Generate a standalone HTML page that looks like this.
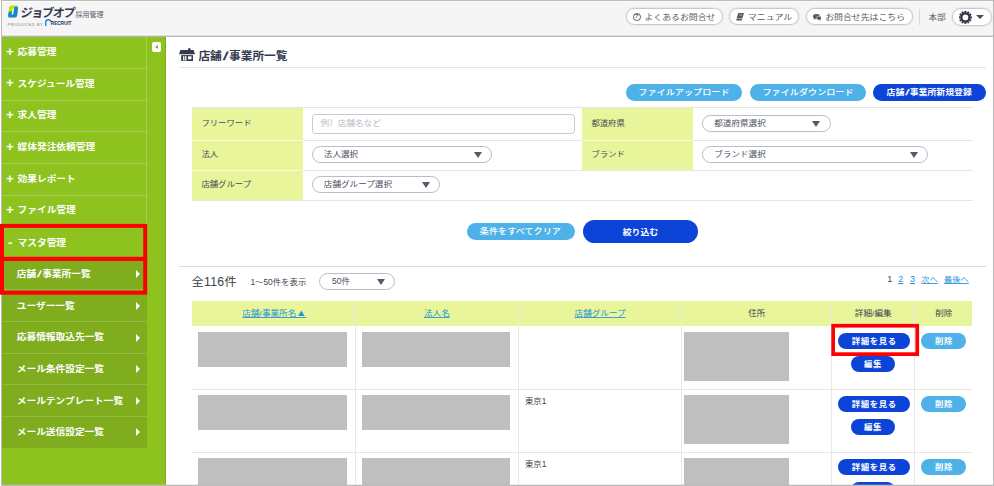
<!DOCTYPE html>
<html lang="ja"><head><meta charset="utf-8"><title>店舗/事業所一覧</title>
<style>
*{box-sizing:border-box;margin:0;padding:0}
html,body{width:994px;height:486px;overflow:hidden;background:#fff}
body{position:relative;font-family:"Liberation Sans","Noto Sans CJK JP",sans-serif;color:#3e4250;font-size:8.7px;line-height:1}
.a{position:absolute;white-space:nowrap}
.q{display:inline-block;line-height:1;transform:scaleY(.89);transform-origin:50% 95%}
.d{display:inline-block;line-height:1;transform:scaleY(1.07);transform-origin:50% 85%}
.qb{display:inline-block;line-height:1;transform:scaleY(.92);transform-origin:50% 95%}
.frame{left:1px;top:0;width:993px;height:486px;border:1px solid #bcbcbc;z-index:50;pointer-events:none;box-shadow:inset 0 -1px 0 rgba(188,188,188,.3),-1px 0 0 #fff}
.hdr{left:0;top:0;width:994px;height:34px;background:#f5f5f5;border-top:2px solid #fbfbfb}
.hline{left:0;top:34px;width:994px;height:3px;background:linear-gradient(#fdfdfd 0,#fdfdfd 1px,#d9dade 1px,#d9dade 2px,#b7b9c0 2px,#b7b9c0 3px)}
.side{left:2px;top:36.8px;width:164.3px;height:450px;background:#8dc21f}
.mi{left:2px;width:145px;height:31.7px;color:#fff;font-weight:bold;font-size:9.7px;line-height:30.4px}
.mi span.s{position:absolute;font-size:13.4px;top:-0.1px;margin-left:-0.3px}
.mi span.t{position:absolute;left:15.6px}
.si{left:2px;width:145px;height:31.55px;color:#fff;font-weight:bold;font-size:9.7px;line-height:30.9px}
.si span.t{position:absolute;left:14.8px}
.si i{position:absolute;left:134.2px;top:11.8px;width:0;height:0;border-left:4.2px solid #fff;border-top:4px solid transparent;border-bottom:4px solid transparent}
.pill{background:#fff;border:1px solid #c6c9d2;box-shadow:0 0 0 1px rgba(200,203,212,.28);border-radius:9px;top:8.4px;height:17px;line-height:15px;color:#555a66;font-size:8.9px}
.sel{background:#fff;border:1px solid #babdc8;border-radius:9px;height:16.6px;line-height:14.6px;color:#4a4e5a;font-size:8.6px}
.sel b{position:absolute;top:4.6px;width:0;height:0;border-top:6.6px solid #555a66;border-left:4px solid transparent;border-right:4px solid transparent}
.lb{background:#e8f59b;color:#454a55;font-size:8.4px}
.btn{border-radius:12px;color:#fff;text-align:center;font-size:8.9px}
.lt{background:#4eb2e8;font-weight:500;font-size:9.15px}
.dk{background:#0c44d8;font-weight:bold}
.ln{background:#e6e6e6;height:1px}
.th{background:#e8f59b;top:300.6px;height:25.4px;line-height:25.4px;text-align:center;font-size:8.6px;color:#3e4250}
.g{background:#bfbfbf}
.sl{display:inline-block;margin:0 0.17em;transform:skewX(-10deg) scaleX(1.5)}
.vl{background:#e9e9e9;width:1px}
a,u{color:#2494d9;text-decoration:underline}
</style></head><body>

<div class="a hdr"></div><div class="a hline"></div>
<svg class="a" style="left:7.7px;top:4.7px" width="10.2" height="13.1" viewBox="0 0 108 134">
<clipPath id="lc"><path d="M36 0H84Q110 0 107 26L97 108Q94 134 68 134H24Q-2 134 1 108L11 26Q14 0 36 0Z"/></clipPath>
<g clip-path="url(#lc)"><rect width="108" height="134" fill="#bfe200"/>
<path d="M62 36Q64 14 84 14Q104 14 108 30V134H-5L4 80Q8 64 24 64Q42 64 40 82L38 98H56Z" fill="#0a88e2"/>
<path d="M47 36Q48 32 52 32H58Q62 32 61.5 36L55 94Q54.5 98 50 98H44Q40 98 40.5 94Z" fill="#fff"/></g></svg>
<div class="a" style="left:20.1px;top:5.5px;font-size:12px;font-weight:bold;color:#353a4e;line-height:14px;transform:skewX(-6deg);transform-origin:left bottom;letter-spacing:-1.35px">ジョブオプ</div>
<div class="a" style="left:75.6px;top:11px;font-size:7px;color:#5a5e6a;line-height:8px">採用管理</div>
<div class="a" style="left:7.4px;top:21.6px;font-size:4.3px;color:#7d7f86;line-height:5px;letter-spacing:0.4px">PRODUCED BY</div>
<svg class="a" style="left:45.1px;top:18.8px" width="6.6" height="7.6" viewBox="0 0 14 16"><path d="M1.5 15.5V7.5Q1.5 1.5 7.5 1.5Q12 1.5 12.8 6" fill="none" stroke="#1f7fd6" stroke-width="2.8" stroke-linecap="butt"/></svg>
<div class="a" style="left:50.8px;top:21.4px;font-size:4.8px;font-weight:bold;color:#22365e;line-height:5px;letter-spacing:-0.12px">RECRUIT</div>
<div class="a pill" style="left:625.6px;width:97px"><span class="a" style="left:6.2px;top:3.6px;width:7.8px;height:7.8px;border:1px solid #555a66;border-radius:50%;font-size:6px;line-height:5.8px;text-align:center;font-weight:bold">?</span><span class="a" style="left:17.8px;top:1px"><span class="q">よくあるお問合せ</span></span></div>
<div class="a pill" style="left:729.1px;width:70.1px"><svg class="a" style="left:5.8px;top:4px" width="8" height="7.5" viewBox="0 0 16 15"><path d="M4.5 0H16L12.5 11H1Z" fill="#555a66"/><path d="M7 2.6H13L12.2 5H6.2Z" fill="#9a9da8"/><path d="M0.6 12H12L11.4 15H2Q0 15 0.6 12Z" fill="#555a66"/></svg><span class="a" style="left:17.9px;top:1px"><span class="q">マニュアル</span></span></div>
<div class="a pill" style="left:806.1px;width:106.5px"><svg class="a" style="left:5.5px;top:4.4px" width="8.8" height="6.8" viewBox="0 0 17.6 13.6"><ellipse cx="6.8" cy="4.8" rx="6.8" ry="4.8" fill="#555a66"/><path d="M2.4 7.6L1.2 11.6L6.4 8.8Z" fill="#555a66"/><ellipse cx="12" cy="8.2" rx="5.4" ry="3.9" fill="#555a66" stroke="#fff" stroke-width="0.9"/><path d="M14.4 10.8L16.6 13.4L11.4 11.8Z" fill="#555a66"/></svg><span class="a" style="left:18.1px;top:1px"><span class="q">お問合せ先はこちら</span></span></div>
<div class="a" style="left:919.4px;top:9px;width:1px;height:16px;background:#d8d9de"></div>
<div class="a" style="left:928.6px;top:12.6px;font-size:8.6px;color:#555a66"><span class="q">本部</span></div>
<div class="a pill" style="left:952.2px;top:8.2px;width:39.6px;height:17.6px"><svg class="a" style="left:5.8px;top:1.8px" width="12.8" height="12.8" viewBox="0 0 24 24"><path d="M10.25 3.38L10.56 0.09L13.44 0.09L13.75 3.38L14.80 3.66L16.71 0.96L19.20 2.40L17.83 5.41L18.59 6.17L21.60 4.80L23.04 7.29L20.34 9.20L20.62 10.25L23.91 10.56L23.91 13.44L20.62 13.75L20.34 14.80L23.04 16.71L21.60 19.20L18.59 17.83L17.83 18.59L19.20 21.60L16.71 23.04L14.80 20.34L13.75 20.62L13.44 23.91L10.56 23.91L10.25 20.62L9.20 20.34L7.29 23.04L4.80 21.60L6.17 18.59L5.41 17.83L2.40 19.20L0.96 16.71L3.66 14.80L3.38 13.75L0.09 13.44L0.09 10.56L3.38 10.25L3.66 9.20L0.96 7.29L2.40 4.80L5.41 6.17L6.17 5.41L4.80 2.40L7.29 0.96L9.20 3.66Z" fill="#2d3142" stroke="#2d3142" stroke-width="0.8" stroke-linejoin="round"/><circle cx="12" cy="12" r="5.4" fill="#fff"/></svg>
<i class="a" style="left:22.8px;top:5.7px;width:0;height:0;border-top:4.6px solid #4a4e5c;border-left:4.2px solid transparent;border-right:4.2px solid transparent"></i></div>
<div class="a side"></div>
<div class="a" style="left:165px;top:37px;width:1px;height:449px;background:#7dac1b"></div>
<div class="a" style="left:146px;top:37px;width:1px;height:222px;background:rgba(255,255,255,.22)"></div>
<div class="a" style="left:2px;top:259px;width:145px;height:189px;background:#7fad1e"></div>
<div class="a mi" style="top:36.80px"><span class="s" style="left:4.2px">+</span><span class="t"><span class="qb">応募管理</span></span></div>
<div class="a" style="left:2px;top:68px;width:145px;height:1px;background:rgba(255,255,255,.24)"></div>
<div class="a mi" style="top:68.50px"><span class="s" style="left:4.2px">+</span><span class="t"><span class="qb">スケジュール管理</span></span></div>
<div class="a" style="left:2px;top:100px;width:145px;height:1px;background:rgba(255,255,255,.24)"></div>
<div class="a mi" style="top:100.20px"><span class="s" style="left:4.2px">+</span><span class="t"><span class="qb">求人管理</span></span></div>
<div class="a" style="left:2px;top:131px;width:145px;height:1px;background:rgba(255,255,255,.24)"></div>
<div class="a mi" style="top:131.90px"><span class="s" style="left:4.2px">+</span><span class="t"><span class="qb">媒体発注依頼管理</span></span></div>
<div class="a" style="left:2px;top:163px;width:145px;height:1px;background:rgba(255,255,255,.24)"></div>
<div class="a mi" style="top:163.60px"><span class="s" style="left:4.2px">+</span><span class="t"><span class="qb">効果レポート</span></span></div>
<div class="a" style="left:2px;top:195px;width:145px;height:1px;background:rgba(255,255,255,.24)"></div>
<div class="a mi" style="top:195.30px"><span class="s" style="left:4.2px">+</span><span class="t"><span class="qb">ファイル管理</span></span></div>
<div class="a" style="left:2px;top:227px;width:145px;height:1px;background:rgba(255,255,255,.24)"></div>
<div class="a mi" style="top:227.00px;line-height:31.7px"><span class="s" style="left:6.2px">-</span><span class="t"><span class="qb">マスタ管理</span></span></div>
<div class="a si" style="top:258.70px"><span class="t"><span class="qb">店舗<span class="sl">/</span>事業所一覧</span></span><i></i></div>
<div class="a si" style="top:290.25px;line-height:32.6px"><span class="t"><span class="qb">ユーザー一覧</span></span><i></i></div>
<div class="a" style="left:2px;top:289px;width:145px;height:1px;background:rgba(255,255,255,.17)"></div>
<div class="a si" style="top:321.80px"><span class="t"><span class="qb">応募情報取込先一覧</span></span><i></i></div>
<div class="a" style="left:2px;top:321px;width:145px;height:1px;background:rgba(255,255,255,.17)"></div>
<div class="a si" style="top:353.35px;line-height:32.6px"><span class="t"><span class="qb">メール条件設定一覧</span></span><i></i></div>
<div class="a" style="left:2px;top:353px;width:145px;height:1px;background:rgba(255,255,255,.17)"></div>
<div class="a si" style="top:384.90px;line-height:32.6px"><span class="t"><span class="qb">メールテンプレート一覧</span></span><i></i></div>
<div class="a" style="left:2px;top:384px;width:145px;height:1px;background:rgba(255,255,255,.17)"></div>
<div class="a si" style="top:416.45px;line-height:32.6px"><span class="t"><span class="qb">メール送信設定一覧</span></span><i></i></div>
<div class="a" style="left:2px;top:416px;width:145px;height:1px;background:rgba(255,255,255,.17)"></div>
<div class="a" style="left:151.8px;top:42px;width:9.6px;height:9.8px;background:#fff;border-radius:2px"><i class="a" style="left:3px;top:2.5px;width:0;height:0;border-right:3.6px solid #7fad1e;border-top:2.4px solid transparent;border-bottom:2.4px solid transparent"></i></div>
<svg class="a" style="left:179px;top:47.5px" width="16" height="13.5" viewBox="0 0 160 135"><g fill="#353a4e"><circle cx="103" cy="12" r="12"/><path d="M14 19H146L160 63H0Z"/><path d="M22 71H140V135H22Z"/></g><g fill="#fff"><rect x="41" y="81" width="13" height="45"/><rect x="61" y="81" width="13" height="45"/><rect x="90" y="83" width="35" height="30"/></g></svg>
<div class="a" style="left:198.4px;top:49.2px;font-size:11.7px;font-weight:bold;color:#353a4e;line-height:14px">店舗<span class="sl">/</span>事業所一覧</div>
<div class="a ln" style="left:179px;top:67.4px;width:806.6px"></div>
<div class="a btn lt" style="left:625.8px;top:84.2px;width:116.4px;height:16.4px;line-height:17.6px"><span class="q">ファイルアップロード</span></div>
<div class="a btn lt" style="left:750.2px;top:84.2px;width:115.8px;height:16.4px;line-height:17.6px"><span class="q">ファイルダウンロード</span></div>
<div class="a btn dk" style="left:873.4px;top:84.2px;width:112.2px;height:16.4px;line-height:17.8px;padding-right:0.6px"><span class="qb">店舗<span class="sl">/</span>事業所新規登録</span></div>
<div class="a ln" style="left:192.2px;top:107px;width:780.4px"></div>
<div class="a ln" style="left:192.2px;top:140px;width:780.4px"></div>
<div class="a ln" style="left:192.2px;top:170.2px;width:780.4px"></div>
<div class="a ln" style="left:192.2px;top:200.2px;width:780.4px"></div>
<div class="a lb" style="left:192.2px;top:108px;width:110.5px;height:32px;line-height:30px;padding-left:9.2px"><span class="q">フリーワード</span></div>
<div class="a lb" style="left:192.2px;top:141px;width:110.5px;height:29.2px;line-height:27.2px;padding-left:9.2px"><span class="q">法人</span></div>
<div class="a lb" style="left:192.2px;top:171.2px;width:110.5px;height:29px;line-height:27px;padding-left:9.2px"><span class="q">店舗グループ</span></div>
<div class="a lb" style="left:582.2px;top:108px;width:110.7px;height:32px;line-height:30px;padding-left:9.2px"><span class="q">都道府県</span></div>
<div class="a lb" style="left:582.2px;top:141px;width:110.7px;height:29.2px;line-height:27.2px;padding-left:9.2px"><span class="q">ブランド</span></div>
<div class="a" style="left:192.2px;top:140px;width:110.5px;height:1px;background:#f7fbdc"></div>
<div class="a" style="left:582.2px;top:140px;width:110.7px;height:1px;background:#f7fbdc"></div>
<div class="a" style="left:192.2px;top:170px;width:110.5px;height:1px;background:#f7fbdc"></div>
<div class="a" style="left:312px;top:114.4px;width:263px;height:19.6px;border:1px solid #c9cbd3;border-radius:3.5px;background:#fff;color:#b9bbc2;font-size:8.6px;line-height:17.6px;padding-left:7.6px"><span class="q">例）店舗名など</span></div>
<div class="a sel" style="left:312px;top:146.2px;width:180.2px"><span class="a" style="left:10.8px"><span class="q">法人選択</span></span><b style="left:161.0px"></b></div>
<div class="a sel" style="left:312px;top:176.4px;width:128px"><span class="a" style="left:10.8px"><span class="q">店舗グループ選択</span></span><b style="left:108.8px"></b></div>
<div class="a sel" style="left:702.4px;top:115px;width:128.2px"><span class="a" style="left:10.8px"><span class="q">都道府県選択</span></span><b style="left:109.0px"></b></div>
<div class="a sel" style="left:702.4px;top:146.2px;width:225.4px"><span class="a" style="left:10.8px"><span class="q">ブランド選択</span></span><b style="left:206.2px"></b></div>
<div class="a btn lt" style="left:467px;top:223.2px;width:107.8px;height:16.4px;line-height:17.6px;padding-right:1px"><span class="q">条件をすべてクリア</span></div>
<div class="a btn dk" style="left:583.4px;top:219.6px;width:114.2px;height:23.3px;line-height:25.4px;font-size:8.9px"><span class="qb">絞り込む</span></div>
<div class="a ln" style="left:179px;top:266px;width:806.6px;background:#dcdcdc"></div>
<div class="a" style="left:191.6px;top:274.6px;font-size:12.2px;color:#3a3d48;line-height:14px;letter-spacing:0.3px"><span class="q">全</span><span class="d">116</span><span class="q">件</span></div>
<div class="a" style="left:250.4px;top:277.4px;font-size:8.4px;color:#3e4250;line-height:10px"><span class="d">1</span><span class="q">～</span><span class="d">50</span><span class="q">件を表示</span></div>
<div class="a sel" style="left:319.4px;top:273px;width:75.6px"><span class="a" style="left:11.6px"><span class="d">50</span><span class="q">件</span></span><b style="left:56.4px"></b></div>
<div class="a" style="left:887.3px;top:275px;font-size:8.25px;line-height:10px;color:#3e4250"><span class="d" style="font-size:9px">1</span></div>
<div class="a" style="left:898.2px;top:275px;font-size:8.25px;line-height:10px;color:#3e4250"><u class="d" style="font-size:9px">2</u></div>
<div class="a" style="left:910px;top:275px;font-size:8.25px;line-height:10px;color:#3e4250"><u class="d" style="font-size:9px">3</u></div>
<div class="a" style="left:921.2px;top:275px;font-size:8.25px;line-height:10px;color:#3e4250"><span class="q"><u>次へ</u></span></div>
<div class="a" style="left:944.1px;top:275px;font-size:8.25px;line-height:10px;color:#3e4250"><span class="q"><u>最後へ</u></span></div>
<div class="a th" style="left:192.2px;width:162.7px"><span class="q"><u>店舗/事業所名<span style="font-size:10.5px;line-height:1;margin-left:-0.4px;margin-right:-1.6px">▲</span></u></span></div>
<div class="a th" style="left:355.9px;width:162.0px"><span class="q"><u>法人名</u></span></div>
<div class="a th" style="left:518.9px;width:162.4px"><span class="q"><u>店舗グループ</u></span></div>
<div class="a th" style="left:682.3px;width:149.0px"><span class="q">住所</span></div>
<div class="a th" style="left:832.3px;width:81.8px"><span class="q">詳細/編集</span></div>
<div class="a th" style="left:915.1px;width:57.3px"><span class="q">削除</span></div>
<div class="a vl" style="left:354.9px;top:300.6px;height:186px"></div>
<div class="a vl" style="left:517.9px;top:300.6px;height:186px"></div>
<div class="a vl" style="left:681.3px;top:300.6px;height:186px"></div>
<div class="a vl" style="left:831.3px;top:300.6px;height:186px"></div>
<div class="a vl" style="left:914.1px;top:300.6px;height:186px"></div>
<div class="a ln" style="left:192.2px;top:388.6px;width:780.2px"></div>
<div class="a g" style="left:197.8px;top:332.0px;width:149.2px;height:34.8px"></div>
<div class="a g" style="left:362px;top:332.0px;width:148px;height:34.8px"></div>
<div class="a g" style="left:684.2px;top:332.0px;width:104.6px;height:49px"></div>
<div class="a btn dk" style="left:838.2px;top:333.0px;width:71.6px;height:16.3px;line-height:16.3px;letter-spacing:0.6px;padding-left:0.6px;font-size:8.4px"><span class="qb">詳細を見る</span></div>
<div class="a btn dk" style="left:850.6px;top:356.0px;width:44.2px;height:16px;line-height:16px;letter-spacing:0.8px;padding-left:0.8px;font-size:8.4px"><span class="qb">編集</span></div>
<div class="a btn lt" style="left:921.4px;top:333.0px;width:44.6px;height:16.3px;line-height:16.3px;letter-spacing:0.8px;padding-left:0.8px;font-size:8.4px;font-weight:bold"><span class="qb">削除</span></div>
<div class="a ln" style="left:192.2px;top:451.5px;width:780.2px"></div>
<div class="a g" style="left:197.8px;top:394.9px;width:149.2px;height:34.8px"></div>
<div class="a g" style="left:362px;top:394.9px;width:148px;height:34.8px"></div>
<div class="a g" style="left:684.2px;top:394.9px;width:104.6px;height:49px"></div>
<div class="a" style="left:525px;top:395.9px;font-size:8.4px;line-height:10px;color:#3e4250"><span class="q">東京</span><span class="d">1</span></div>
<div class="a btn dk" style="left:838.2px;top:395.9px;width:71.6px;height:16.3px;line-height:16.3px;letter-spacing:0.6px;padding-left:0.6px;font-size:8.4px"><span class="qb">詳細を見る</span></div>
<div class="a btn dk" style="left:850.6px;top:418.9px;width:44.2px;height:16px;line-height:16px;letter-spacing:0.8px;padding-left:0.8px;font-size:8.4px"><span class="qb">編集</span></div>
<div class="a btn lt" style="left:921.4px;top:395.9px;width:44.6px;height:16.3px;line-height:16.3px;letter-spacing:0.8px;padding-left:0.8px;font-size:8.4px;font-weight:bold"><span class="qb">削除</span></div>
<div class="a ln" style="left:192.2px;top:514.4px;width:780.2px"></div>
<div class="a g" style="left:197.8px;top:457.8px;width:149.2px;height:34.8px"></div>
<div class="a g" style="left:362px;top:457.8px;width:148px;height:34.8px"></div>
<div class="a g" style="left:684.2px;top:457.8px;width:104.6px;height:49px"></div>
<div class="a" style="left:525px;top:458.8px;font-size:8.4px;line-height:10px;color:#3e4250"><span class="q">東京</span><span class="d">1</span></div>
<div class="a btn dk" style="left:838.2px;top:458.8px;width:71.6px;height:16.3px;line-height:16.3px;letter-spacing:0.6px;padding-left:0.6px;font-size:8.4px"><span class="qb">詳細を見る</span></div>
<div class="a btn dk" style="left:850.6px;top:481.8px;width:44.2px;height:16px;line-height:16px;letter-spacing:0.8px;padding-left:0.8px;font-size:8.4px"><span class="qb">編集</span></div>
<div class="a btn lt" style="left:921.4px;top:458.8px;width:44.6px;height:16.3px;line-height:16.3px;letter-spacing:0.8px;padding-left:0.8px;font-size:8.4px;font-weight:bold"><span class="qb">削除</span></div>
<div class="a frame"></div>
<svg class="a" style="left:0;top:0;z-index:60" width="994" height="486" viewBox="0 0 994 486"><rect x="2.00" y="225.90" width="143.20" height="32.90" fill="none" stroke="#fe0000" stroke-width="4"/><rect x="2.00" y="259.00" width="143.20" height="33.70" fill="none" stroke="#fe0000" stroke-width="4"/><rect x="833.15" y="325.75" width="84.10" height="28.40" fill="none" stroke="#fe0000" stroke-width="3.7"/></svg>
</body></html>
